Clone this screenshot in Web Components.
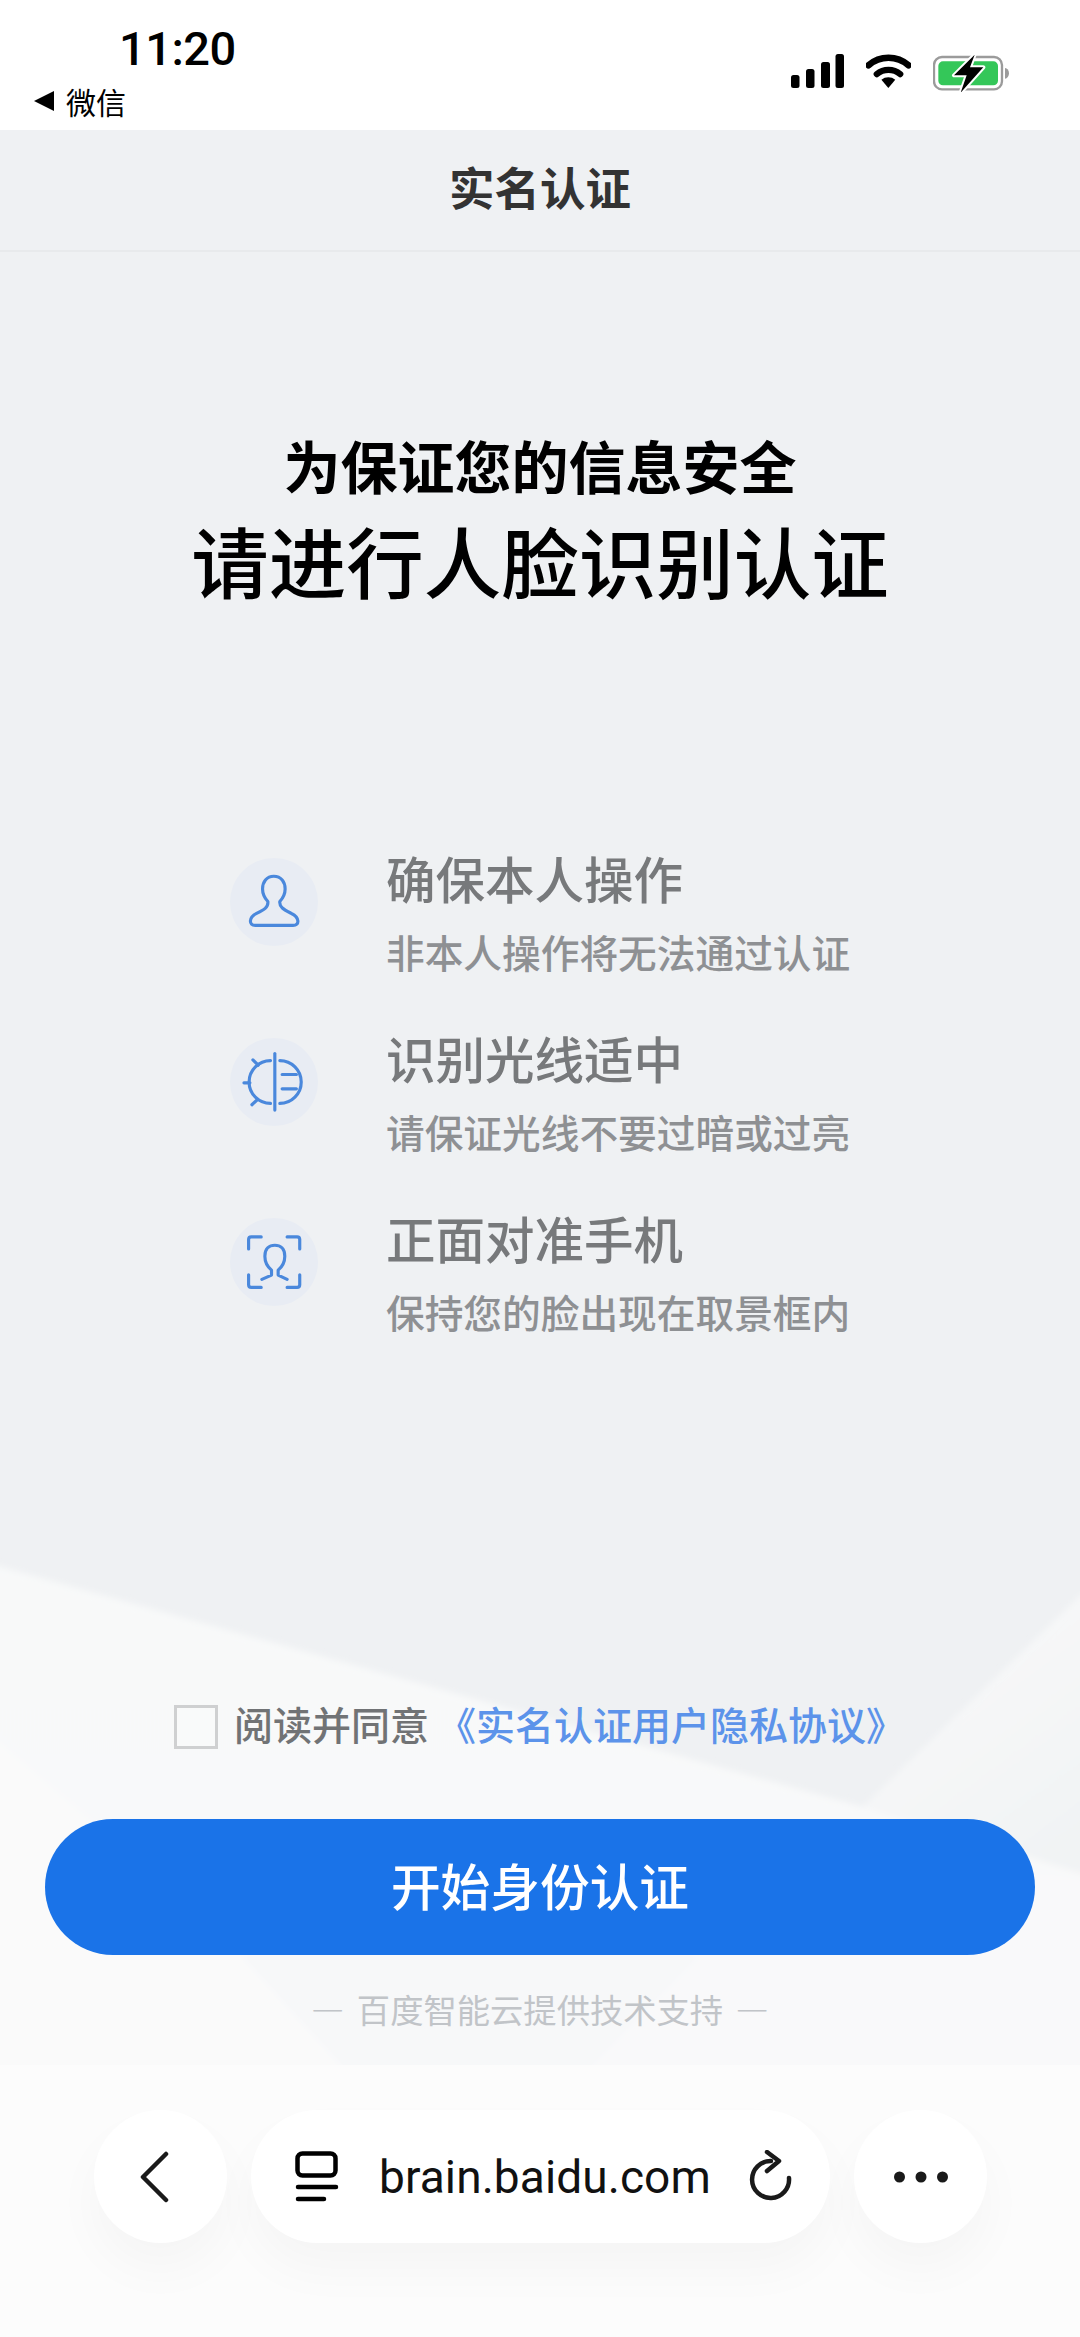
<!DOCTYPE html>
<html lang="zh-CN">
<head>
<meta charset="utf-8">
<title>实名认证</title>
<style>
    html, body { margin: 0; padding: 0; }
    body {
        width: 1080px;
        height: 2337px;
        overflow: hidden;
        background: #fcfcfc;
        font-family: "Noto Sans CJK SC", "Noto Sans", sans-serif;
    }
    app-page { height: 2337px; }
</style>
</head>
<body>
<app-page>
    <status-bar></status-bar>
    <page-header>实名认证</page-header>
    <auth-main>
        <intro-title line1="为保证您的信息安全" line2="请进行人脸识别认证"></intro-title>
        <tip-list>
            <tip-item icon="person" heading="确保本人操作">非本人操作将无法通过认证</tip-item>
            <tip-item icon="light" heading="识别光线适中">请保证光线不要过暗或过亮</tip-item>
            <tip-item icon="face" heading="正面对准手机">保持您的脸出现在取景框内</tip-item>
        </tip-list>
        <agree-row></agree-row>
        <start-button>开始身份认证</start-button>
        <tech-note>— 百度智能云提供技术支持 —</tech-note>
    </auth-main>
    <browser-bar url="brain.baidu.com"></browser-bar>
</app-page>

<script>
const CJK = '"Noto Sans CJK SC", "Noto Sans", sans-serif'

class AppPage extends HTMLElement {
    constructor() {
        super()
        this.attachShadow({ mode: 'open' })
        this.shadowRoot.innerHTML = `<style>
            :host { display: flex; flex-direction: column; width: 1080px; }
        </style><slot></slot>`
    }
}

class StatusBar extends HTMLElement {
    constructor() {
        super()
        this.attachShadow({ mode: 'open' })
        this.shadowRoot.innerHTML = `<style>
            :host {
                display: flex;
                justify-content: space-between;
                height: 130px;
                flex: none;
                background: #fff;
                color: #000;
            }
            .left { display: flex; flex-direction: column; padding: 25px 0 0 34px; }
            .time {
                font: 500 47px/48px Roboto, sans-serif;
                margin-left: 85px;
                letter-spacing: -0.5px;
            }
            .back { display: flex; align-items: center; gap: 12px; margin-top: 13px; font: 400 30px/30px ${CJK}; }
            .back i {
                width: 0; height: 0;
                border-style: solid;
                border-width: 10px 20px 10px 0;
                border-color: transparent #000 transparent transparent;
            }
            .right { display: flex; gap: 22px; padding: 54px 71px 0 0; align-items: flex-start; }
            svg { display: block; }
        </style>
        <div class="left">
            <span class="time">11:20</span>
            <span class="back"><i></i>微信</span>
        </div>
        <div class="right">
            <svg width="53" height="34" viewBox="0 0 53 34">
                <rect x="0" y="21" width="8.5" height="13" rx="2.5"/>
                <rect x="15" y="15" width="8.5" height="19" rx="2.5"/>
                <rect x="30" y="8" width="9" height="26" rx="2.5"/>
                <rect x="44.5" y="0" width="8.5" height="34" rx="2.5"/>
            </svg>
            <svg width="45" height="34" viewBox="315 72 135 103">
                <path d="M322 106A92 92 0 0 1 443 106" fill="none" stroke="#000" stroke-width="20" stroke-linecap="round"/>
                <path d="M347 133A56 56 0 0 1 418 133" fill="none" stroke="#000" stroke-width="19" stroke-linecap="round"/>
                <path d="M382 175L361 150A34 34 0 0 1 403 150Z"/>
            </svg>
            <svg width="76" height="38" viewBox="515 66 228 114">
                <rect x="518" y="75" width="204" height="97" rx="24" fill="#fff" stroke="#9b9b9b" stroke-width="7"/>
                <rect x="531" y="88" width="179" height="72" rx="14" fill="#34c759"/>
                <path d="M731 108a12 16 0 0 1 0 32z" fill="#9b9b9b"/>
                <path d="M640 68L578 130H616L598 182L666 106H626Z" fill="#000" stroke="#fff" stroke-width="12" paint-order="stroke" stroke-linejoin="round"/>
            </svg>
        </div>`
    }
}

class PageHeader extends HTMLElement {
    constructor() {
        super()
        this.attachShadow({ mode: 'open' })
        this.shadowRoot.innerHTML = `<style>
            :host {
                display: flex;
                align-items: center;
                justify-content: center;
                flex: none;
                box-sizing: border-box;
                height: 122px;
                padding-bottom: 7px;
                background: #eff1f3;
                border-bottom: 2px solid #e8eaec;
                color: #333;
                font: 700 45.5px/1 ${CJK};
            }
        </style><slot></slot>`
    }
}

class AuthMain extends HTMLElement {
    constructor() {
        super()
        this.attachShadow({ mode: 'open' })
        this.shadowRoot.innerHTML = `<style>
            :host {
                display: flex;
                flex-direction: column;
                align-items: center;
                position: relative;
                isolation: isolate;
                flex: none;
                height: 1813px;
                box-sizing: border-box;
                padding-top: 172px;
                background: #eff1f3;
                overflow: hidden;
            }
            svg { position: absolute; left: 0; top: 0; z-index: -1; }
        </style>
        <svg width="1080" height="1813" viewBox="0 252 1080 1813">
            <defs>
                <linearGradient id="lower" x1="0" y1="1570" x2="0" y2="2065" gradientUnits="userSpaceOnUse">
                    <stop offset="0" stop-color="#f8f9f9"/>
                    <stop offset="1" stop-color="#f9f9fa"/>
                </linearGradient>
                <linearGradient id="wedge" x1="950" y1="1700" x2="1060" y2="1850" gradientUnits="userSpaceOnUse">
                    <stop offset="0" stop-color="#f6f7f8"/>
                    <stop offset="1" stop-color="#f1f3f4"/>
                </linearGradient>
                <filter id="soft" x="-5%" y="-5%" width="110%" height="110%"><feGaussianBlur stdDeviation="3"/></filter>
            </defs>
            <g filter="url(#soft)">
                <polygon points="-20,1561 863,1807 1100,1577 1100,2100 -20,2100" fill="url(#lower)"/>
                <polygon points="863,1807 1100,1580 1100,1879" fill="url(#wedge)"/>
                <polygon points="-20,1728 372,2065 372,2100 -20,2100" fill="#fafafa"/>
                <polygon points="240,1955 700,1955 560,2100 372,2100" fill="#f7f8f9"/>
            </g>
        </svg>
        <slot></slot>`
    }
}

class IntroTitle extends HTMLElement {
    connectedCallback() {
        this.attachShadow({ mode: 'open' })
        this.shadowRoot.innerHTML = `<style>
            :host { display: block; text-align: center; color: #000; flex: none; }
            div { white-space: nowrap; }
            .one { font: 700 57px/80px ${CJK}; }
            .two { font: 500 77.5px/110px ${CJK}; }
        </style>
        <div class="one">${this.getAttribute('line1')}</div>
        <div class="two">${this.getAttribute('line2')}</div>`
    }
}

class TipList extends HTMLElement {
    constructor() {
        super()
        this.attachShadow({ mode: 'open' })
        this.shadowRoot.innerHTML = `<style>
            :host {
                display: flex;
                flex-direction: column;
                gap: 56px;
                align-self: flex-start;
                margin: 236px 0 0 230px;
                flex: none;
            }
        </style><slot></slot>`
    }
}

// paths are in zoomed-reference units, one viewBox per icon
const TIP_ICONS = {
    person: `<svg viewBox="90 85 265 265">
        <path d="M222 140C200 140 188 158 188 178C188 196 196 207 204 216C206 234 192 241 170 252C146 264 146 288 166 288H280C300 288 300 264 275 252C254 241 238 234 240 216C248 207 256 196 256 178C256 158 244 140 222 140Z"/>
    </svg>`,
    light: `<svg viewBox="90 625 265 265">
        <path d="M225 672V842"/>
        <path d="M212 693A64 64 0 0 0 212 822"/>
        <path d="M240 693A64 64 0 0 1 240 822"/>
        <path d="M247 735H290M247 778H290"/>
        <path d="M159 691L175 707M132 760H150M156 826L172 811"/>
    </svg>`,
    face: `<svg viewBox="90 1165 265 265">
        <path d="M146 1258V1230Q146 1222 154 1222H184M262 1222H292Q300 1222 300 1230V1258"/>
        <path d="M146 1336V1366Q146 1374 154 1374H184M262 1374H292Q300 1374 300 1366V1336"/>
        <path d="M186 1350L215 1337V1322C202 1311 195 1296 195 1280C195 1258 208 1247 225 1247C242 1247 255 1258 255 1280C255 1296 248 1311 235 1322V1337L262 1350"/>
    </svg>`
}

class TipItem extends HTMLElement {
    connectedCallback() {
        this.attachShadow({ mode: 'open' })
        this.shadowRoot.innerHTML = `<style>
            :host {
                display: flex;
                gap: 68px;
                white-space: nowrap;
            }
            .badge {
                width: 88px;
                height: 88px;
                margin-top: 8px;
                border-radius: 50%;
                background: #e8ecf3;
                flex: none;
            }
            svg {
                display: block;
                width: 88px;
                height: 88px;
                fill: none;
                stroke: #4a88dc;
                stroke-width: 9.5;
                stroke-linecap: round;
                stroke-linejoin: round;
            }
            h3 { margin: 0; font: 500 49.5px/56px ${CJK}; color: #77797b; }
            p { margin: 22px 0 0; font: 500 38.7px/46px ${CJK}; color: #8e9093; }
        </style>
        <div class="badge">${TIP_ICONS[this.getAttribute('icon')]}</div>
        <div>
            <h3>${this.getAttribute('heading')}</h3>
            <p><slot></slot></p>
        </div>`
    }
}

class AgreeRow extends HTMLElement {
    constructor() {
        super()
        this.attachShadow({ mode: 'open' })
        this.shadowRoot.innerHTML = `<style>
            :host {
                display: flex;
                align-items: center;
                align-self: flex-start;
                margin: 371px 0 0 174px;
                height: 44px;
                white-space: nowrap;
                flex: none;
                font: 500 39px/44px ${CJK};
            }
            .box {
                box-sizing: border-box;
                width: 44px;
                height: 44px;
                border: 3px solid #cfd0d1;
                background: #f9fafa;
                margin-right: 16px;
            }
            .text { color: #717375; margin-bottom: 8px; }
            a { color: #5c93ea; margin-left: 8px; margin-bottom: 8px; text-decoration: none; }
        </style>
        <span class="box"></span>
        <span class="text">阅读并同意</span>
        <a>《实名认证用户隐私协议》</a>`
    }
}

class StartButton extends HTMLElement {
    constructor() {
        super()
        this.attachShadow({ mode: 'open' })
        this.shadowRoot.innerHTML = `<style>
            :host {
                display: flex;
                align-items: center;
                justify-content: center;
                align-self: stretch;
                flex: none;
                box-sizing: border-box;
                height: 136px;
                padding-bottom: 4px;
                margin: 70px 45px 0;
                border-radius: 68px;
                background: #1a73e8;
                color: #fff;
                font: 500 49.7px/1 ${CJK};
            }
        </style><slot></slot>`
    }
}

class TechNote extends HTMLElement {
    constructor() {
        super()
        this.attachShadow({ mode: 'open' })
        this.shadowRoot.innerHTML = `<style>
            :host {
                display: block;
                flex: none;
                margin-top: 32px;
                font: 400 33.3px/44px ${CJK};
                word-spacing: 5px;
                color: #c1c4c8;
                white-space: nowrap;
            }
        </style><slot></slot>`
    }
}

class BrowserBar extends HTMLElement {
    connectedCallback() {
        this.attachShadow({ mode: 'open' })
        this.shadowRoot.innerHTML = `<style>
            :host {
                display: flex;
                flex: none;
                box-sizing: border-box;
                height: 272px;
                padding: 45px 94px 0;
                gap: 24px;
                background: #fcfcfc;
            }
            .pill {
                display: flex;
                align-items: center;
                height: 133px;
                border-radius: 67px;
                background: #fff;
                box-shadow: 0 26px 50px rgba(0, 0, 0, 0.03);
                flex: none;
            }
            .round { width: 133px; justify-content: center; }
            .back svg { margin-right: 14px; }
            .url { width: 579px; padding-left: 44px; box-sizing: border-box; }
            .url span {
                font: 400 46px/1 Roboto, sans-serif;
                color: #111;
                margin-left: 40px;
                letter-spacing: 0.1px;
            }
            svg { display: block; flex: none; fill: none; stroke: #1a1a1a; stroke-linecap: round; stroke-linejoin: round; }
            .reload { margin-left: 37px; }
        </style>
        <div class="pill round back">
            <svg width="30" height="52" viewBox="0 0 30 52" stroke-width="4.5"><path d="M27 3L4 26L27 49"/></svg>
        </div>
        <div class="pill url">
            <svg width="44" height="52" viewBox="0 0 44 52" style="stroke:#000" stroke-width="4.5">
                <rect x="2.5" y="2.5" width="38" height="22" rx="5"/>
                <path d="M3 36H41M3 48H29"/>
            </svg>
            <span>${this.getAttribute('url')}</span>
            <svg class="reload" width="46" height="54" viewBox="0 0 46 54" stroke-width="4.5">
                <path d="M41 28A18.500 18.500 0 1 1 23 11"/>
                <path d="M19 2L31 11L19 21"/>
            </svg>
        </div>
        <div class="pill round">
            <svg width="56" height="14" viewBox="0 0 56 14" style="stroke:none;fill:#1a1a1a">
                <circle cx="6.500" cy="7" r="5.500"/><circle cx="28" cy="7" r="5.500"/><circle cx="49.500" cy="7" r="5.500"/>
            </svg>
        </div>`
    }
}

customElements.define('app-page', AppPage)
customElements.define('status-bar', StatusBar)
customElements.define('page-header', PageHeader)
customElements.define('auth-main', AuthMain)
customElements.define('intro-title', IntroTitle)
customElements.define('tip-list', TipList)
customElements.define('tip-item', TipItem)
customElements.define('agree-row', AgreeRow)
customElements.define('start-button', StartButton)
customElements.define('tech-note', TechNote)
customElements.define('browser-bar', BrowserBar)
</script>
</body>
</html>
